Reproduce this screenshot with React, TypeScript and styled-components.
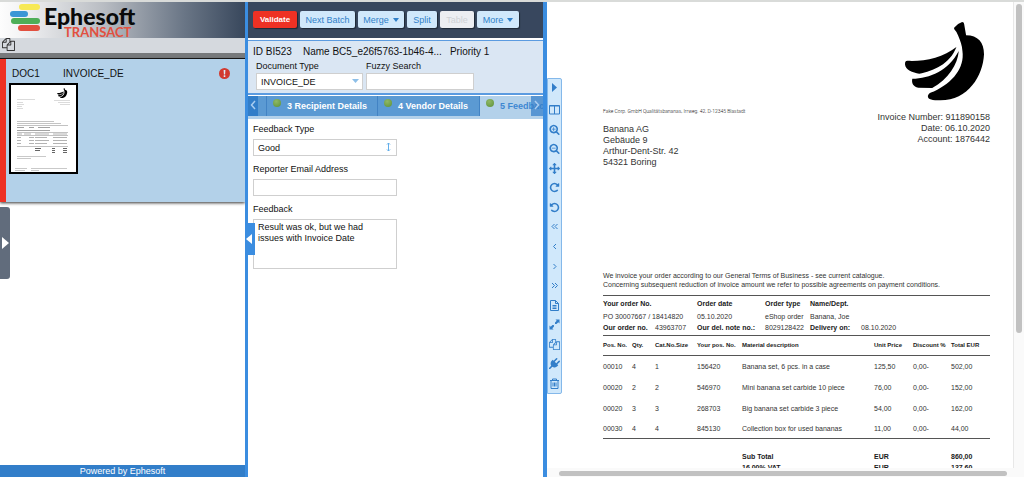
import React from "react";
import styled, { createGlobalStyle } from "styled-components";

const GlobalStyle = createGlobalStyle`
  * { box-sizing: border-box; }
  body { margin: 0; background: #fff; }
  body, button, input, select, textarea {
    font-family: "Liberation Sans", Arial, Helvetica, sans-serif;
    font-size: 9px;
    color: #111;
  }
`;

const Shell = styled.div`
  display: grid;
  grid-template-columns: 245fr 3px 295fr 4px 477fr;
  height: 100vh;
  border-top: 2px solid #d9dbd9;
  overflow: hidden;
`;

const Divider = styled.div`
  position: relative;
  background: #3b8de0;
`;

/* ---------- Batch panel ---------- */

const BatchPanel = styled.section`
  position: relative;
  display: flex;
  flex-direction: column;
  min-width: 0;
`;

const Brand = styled.header`
  display: flex;
  height: 36px;
  flex: none;
  padding: 2px 0 0 10px;
  background: linear-gradient(90deg, #fdfdfd 0%, #f4f4f5 8%, #b9bdc3 42%, #6a7686 75%, #38475c 100%);
`;

const BrandMark = styled.svg`
  width: 31px;
  height: 28px;
  flex: none;
`;

const BrandText = styled.div`
  display: flex;
  flex-direction: column;
  padding-left: 3px;
  font-family: Lato, "Open Sans", sans-serif;
`;

const BrandName = styled.span`
  font-size: 23px;
  line-height: 24px;
  font-weight: 900;
  color: #0a0a0a;
`;

const BrandProduct = styled.span`
  padding-left: 20px;
  margin-top: -2px;
  font-size: 13px;
  line-height: 13px;
  font-weight: 700;
  color: #e2503f;
`;

const BatchTools = styled.div`
  flex: none;
  height: 15px;
  padding-left: 2px;
  background: #d5d9de;
`;

const BatchStrip = styled.div`
  flex: none;
  height: 6px;
  background: #777a7c;
  border-bottom: 1px solid #111;
`;

const PlainButton = styled.button`
  display: flex;
  align-items: center;
  justify-content: center;
  padding: 0;
  border: 0;
  background: none;
  color: inherit;
`;

const DocumentCard = styled.article`
  flex: none;
  height: 143px;
  padding: 4px 15px 0 3px;
  border-left: 6px solid #ee3124;
  background: #b3d1e9;
  box-shadow: 0 1px 3px #333;
`;

const CardHead = styled.div`
  display: flex;
  align-items: center;
  height: 20px;
  padding-left: 3px;
  font-size: 10px;
`;

const CardId = styled.span`
  width: 51px;
`;

const CardAlert = styled.svg`
  width: 11px;
  height: 11px;
  margin-left: auto;
`;

const Thumbnail = styled.svg`
  display: block;
  width: 69px;
  height: 91px;
  border: 2px solid #000;
  background: #fff;
`;

const BatchFooter = styled.footer`
  flex: none;
  height: 12px;
  margin-top: auto;
  background: #327ec9;
  color: #fff;
  line-height: 13px;
  text-align: center;
`;

const SideHandle = styled.button`
  position: absolute;
  left: 0;
  top: 205px;
  width: 10px;
  height: 72px;
  display: flex;
  align-items: center;
  justify-content: flex-end;
  padding: 0 1px 0 0;
  border: 0;
  border-radius: 0 3px 3px 0;
  background: #616c7c;
`;

const CollapseHandle = styled.button`
  position: absolute;
  z-index: 2;
  left: 0;
  top: 221px;
  width: 10px;
  height: 32px;
  display: flex;
  align-items: center;
  padding: 0 0 0 1px;
  border: 0;
  background: #3b8de0;
`;

/* ---------- Validation panel ---------- */

const ValidationPanel = styled.section`
  display: flex;
  flex-direction: column;
  min-width: 0;
`;

const ActionBar = styled.div`
  display: flex;
  flex: none;
  gap: 3px;
  height: 36px;
  padding: 9px 5px;
  background: #38475e;
`;

const Action = styled.button<{ $tone?: "danger" | "muted"; $basis: number }>`
  flex: 0 0 ${(p) => p.$basis}px;
  display: flex;
  align-items: center;
  justify-content: center;
  gap: 4px;
  height: 17px;
  padding: 0;
  border: 0;
  border-radius: 2px;
  box-shadow: 1px 1px 1px #1e2836;
  white-space: nowrap;
  font-weight: ${(p) => (p.$tone === "danger" ? 700 : 400)};
  font-size: ${(p) => (p.$tone === "danger" ? 8 : 9)}px;
  color: ${(p) => (p.$tone === "danger" ? "#fff" : p.$tone === "muted" ? "#cfd2d6" : "#2f7fc8")};
  background: ${(p) => (p.$tone === "danger" ? "#ee3124" : p.$tone === "muted" ? "#eceef2" : "#d0e8fb")};
`;

const BatchInfo = styled.div`
  flex: none;
  height: 55px;
  margin-top: 2px;
  padding: 4px 5px 0;
  border-top: 1px solid #5b9be0;
  border-bottom: 2px solid #5b9be0;
  background: #dae6f3;
`;

const InfoRow = styled.div`
  display: flex;
  gap: 11px;
  height: 15px;
  font-size: 10px;
  line-height: 14px;
  white-space: nowrap;
`;

const InfoName = styled.span`
  width: 136px;
`;

const Lookup = styled.div`
  display: flex;
  gap: 3px;
  padding-left: 3px;
`;

const Field = styled.label`
  display: flex;
  flex-direction: column;
  line-height: 13px;
`;

const FieldBox = styled.span<{ $width: number }>`
  position: relative;
  display: block;
  width: ${(p) => p.$width}px;
`;

const fieldLook = `
  display: block;
  width: 100%;
  height: 17px;
  margin: 0;
  padding: 0 4px;
  border: 1px solid #cfcfcf;
  border-radius: 0;
  background: #fff;
  appearance: none;
  outline: none;
`;

const Input = styled.input`${fieldLook}`;
const Select = styled.select`${fieldLook}`;

const TextArea = styled.textarea`
  ${fieldLook}
  height: 50px;
  padding: 2px 4px;
  line-height: 11px;
  resize: none;
  overflow: hidden;
`;

const FieldIcon = styled.svg<{ $inset: number }>`
  position: absolute;
  top: 3px;
  right: ${(p) => p.$inset}px;
  width: 7px;
  height: 10px;
  pointer-events: none;
`;

const Tabs = styled.div`
  position: relative;
  display: flex;
  flex: none;
  height: 23px;
  margin-top: 1px;
  padding-left: 18px;
  border-bottom: 3px solid #b3d1ea;
  background: #5b9ad3;
  overflow: hidden;
`;

const Tab = styled.button<{ $active?: boolean; $width: number }>`
  flex: 0 0 ${(p) => p.$width}px;
  display: flex;
  gap: 6px;
  padding: 0 0 0 6px;
  border: 0;
  border-left: 1px solid #4283c4;
  white-space: nowrap;
  font-weight: 700;
  line-height: 20px;
  color: ${(p) => (p.$active ? "#3d88d2" : "#fff")};
  background: ${(p) => (p.$active ? "#b3d1ea" : "#5b9ad3")};
`;

const TabDot = styled.span`
  width: 8px;
  height: 8px;
  margin-top: 3px;
  border-radius: 4px;
  background: radial-gradient(circle at 40% 30%, #8fb866, #5c9138);
`;

const TabScroll = styled.button<{ $side: "left" | "right" }>`
  position: absolute;
  top: 0;
  ${(p) => p.$side}: 0;
  width: ${(p) => (p.$side === "left" ? 10 : 12)}px;
  height: 20px;
  padding: 0;
  border: 0;
  background: ${(p) => (p.$side === "left" ? "#327ec9" : "rgba(50, 126, 201, 0.7)")};
`;

const Form = styled.form`
  display: flex;
  flex-direction: column;
  gap: 7px;
  padding: 4px 5px;
`;

const FormField = styled(Field)`
  gap: 3px;
`;

/* ---------- Viewer ---------- */

const Viewer = styled.section`
  display: grid;
  grid-template-columns: 15px minmax(0, 1fr) 11px;
  grid-template-rows: minmax(0, 1fr) 9px;
  min-width: 0;
  min-height: 0;
`;

const ViewerTools = styled.nav`
  align-self: start;
  display: flex;
  flex-direction: column;
  height: 316px;
  margin-top: 76px;
  border: 1px solid #84b8ea;
  border-radius: 0 2px 2px 0;
  background: #d0e8fb;
  color: #327ec9;
`;

const Tool = styled(PlainButton)`
  flex: 1 1 0;
  min-height: 0;
  &:first-child {
    flex: 0 0 17px;
    margin-bottom: 4px;
  }
`;

const Glyph = styled.svg`
  display: block;
  width: 11px;
  height: 11px;
`;

const TrackY = styled.div`
  padding: 2px 2px 0;
  border-left: 1px solid #e8e8e8;
  background: #fafafa;
`;

const TrackX = styled.div`
  grid-column: 1 / -1;
  padding: 3px 17px 0 12px;
  background: #fafafa;
`;

const Thumb = styled.div<{ $vertical?: boolean }>`
  height: ${(p) => (p.$vertical ? "71%" : "5px")};
  border-radius: 3px;
  background: #c1c1c1;
`;

const Invoice = styled.article`
  min-height: 0;
  padding: 19px 23px 0 41px;
  overflow: hidden;
  color: #333;
`;

const InvoiceHead = styled.div`
  display: flex;
  justify-content: space-between;
  height: 250px;
  line-height: 11px;
`;

const Sender = styled.div`
  padding-top: 86px;
`;

const ReturnLine = styled.p`
  margin: 0 0 8px;
  font-family: Roboto, "Liberation Sans", sans-serif;
  font-size: 5px;
  font-weight: 300;
  line-height: 9px;
  color: #111;
`;

const Lines = styled.p`
  margin: 0;
  white-space: pre-line;
`;

const Reference = styled.div`
  text-align: right;
`;

const Banana = styled.svg`
  display: block;
  width: 83px;
  height: 81px;
  margin: 0 4px 10px auto;
`;

const Terms = styled.p`
  margin: 0 0 6px;
  font-size: 7px;
  line-height: 9px;
  white-space: nowrap;
`;

const Sheet = styled.table`
  width: 100%;
  table-layout: fixed;
  border-collapse: separate;
  border-spacing: 0;
  border-top: 1px solid #555;
  font-size: 7px;
  line-height: 9px;
  th, td {
    padding: 0;
    text-align: left;
    vertical-align: middle;
    white-space: nowrap;
  }
  th { color: #1a1a1a; }
`;

const Row = styled.tr<{ $height: number }>`
  height: ${(p) => p.$height}px;
`;

const OrderSheet = styled(Sheet)`
  padding-bottom: 3px;
`;

const ItemSheet = styled(Sheet)`
  thead th {
    font-size: 6px;
    border-bottom: 1px solid #555;
  }
  tbody tr:last-child td { border-bottom: 1px solid #555; }
`;

/* ---------- Drawings ---------- */

const faBox = "0 0 1792 1792";
const filesPath =
  "M1696 384q40 0 68 28t28 68v1216q0 40-28 68t-68 28h-960q-40 0-68-28t-28-68v-288h-544q-40 0-68-28t-28-68v-672q0-40 20-88t48-76l408-408q28-28 76-48t88-20h416q40 0 68 28t28 68v328q68-40 128-40h416zm-544 213l-299 299h299v-299zm-640-384l-299 299h299v-299zm196 647l316-316v-416h-384v416q0 40-28 68t-68 28h-416v640h512v-256q0-40 20-88t48-76zm956 804v-1152h-384v416q0 40-28 68t-68 28h-416v640h896z";
const lens =
  "m128 32q0-185-131.500-316.500t-316.500-131.500-316.500 131.500-131.500 316.500 131.500 316.500 316.500 131.500 316.500-131.500 131.500-316.500zm512 832q0 53-37.500 90.500t-90.500 37.500q-54 0-90-38l-343-342q-179 124-399 124-143 0-273.500-55.500t-225-150-150-225-55.500-273.500 55.500-273.500 150-225 225-150 273.500-55.500 273.500 55.500 225 150 150 225 55.500 273.500q0 220-124 399l343 343q37 37 37 90z";
const zoomInPath =
  "M1088 800v64q0 13-9.500 22.500t-22.500 9.500h-224v224q0 13-9.500 22.500t-22.500 9.500h-64q-13 0-22.500-9.500t-9.500-22.500v-224h-224q-13 0-22.500-9.500t-9.500-22.500v-64q0-13 9.500-22.500t22.500-9.500h224v-224q0-13 9.500-22.500t22.500-9.500h64q13 0 22.500 9.500t9.500 22.500v224h224q13 0 22.500 9.500t9.500 22.500z" + lens;
const zoomOutPath =
  "M1088 800v64q0 13-9.500 22.500t-22.500 9.500h-576q-13 0-22.500-9.500t-9.500-22.500v-64q0-13 9.500-22.500t22.500-9.500h576q13 0 22.500 9.500t9.500 22.500z" + lens;
const movePath =
  "M1792 896q0 26-19 45l-256 256q-19 19-45 19t-45-19-19-45v-128h-384v384h128q26 0 45 19t19 45-19 45l-256 256q-19 19-45 19t-45-19l-256-256q-19-19-19-45t19-45 45-19h128v-384h-384v128q0 26-19 45t-45 19-45-19l-256-256q-19-19-19-45t19-45l256-256q19-19 45-19t45 19 19 45v128h384v-384h-128q-26 0-45-19t-19-45 19-45l256-256q19-19 45-19t45 19l256 256q19 19 19 45t-19 45-45 19h-128v384h384v-128q0-26 19-45t45-19 45 19l256 256q19 19 19 45z";
const rotatePath =
  "M1664 256v448q0 26-19 45t-45 19h-448q-42 0-59-40-17-39 14-69l138-138q-148-137-349-137-104 0-198.500 40.500t-163.500 109.500-109.500 163.500-40.500 198.500 40.500 198.500 109.500 163.500 163.500 109.500 198.500 40.500q119 0 225-52t179-147q7-10 23-12 15 0 25 9l137 138q9 8 9.500 20.500t-7.500 22.500q-109 132-264 204.500t-327 72.500q-156 0-298-61t-245-164-164-245-61-298 61-298 164-245 245-164 298-61q147 0 284.500 55.500t244.500 156.500l130-129q29-31 70-14 39 17 39 59z";
const plugPath =
  "M1755 453q37 38 37 90.500t-37 90.500l-401 400 150 150-160 160q-163 163-389.500 186.500t-411.500-100.500l-362 362h-181v-181l362-362q-124-185-100.500-411.500t186.500-389.500l160-160 150 150 400-401q38-37 91-37t90 37 37 90.500-37 90.500l-400 401 234 234 401-400q38-37 91-37t90 37z";

const Solid = ({ d, flip }: { d: string; flip?: boolean }) => (
  <Glyph viewBox={faBox} fill="currentColor" aria-hidden="true">
    <path d={d} transform={flip ? "translate(1792 0) scale(-1 1)" : undefined} />
  </Glyph>
);

const Line = ({ d, width = 1 }: { d: string; width?: number }) => (
  <Glyph viewBox="0 0 11 11" fill="none" stroke="currentColor" strokeWidth={width} aria-hidden="true">
    <path d={d} />
  </Glyph>
);

const Caret = () => (
  <svg width="6" height="4" viewBox="0 0 6 4" fill="currentColor" aria-hidden="true">
    <path d="M0 0h6L3 4z" />
  </svg>
);

const BananaShape = () => (
  <>
    <path d="M1093 80Q1104 67 1117 63Q1123 63 1123 68L1129 103C1165 103 1183 125 1183 160C1180 225 1135 300 1050 299C1030 299 1012 297 1014 285C1016 277 1022 275 1032 272C1090 245 1125 200 1118 150C1117 135 1112 120 1105 104Q1101 92 1093 84Z" />
    <path d="M1107 150C1104 190 1075 235 1027 262L985 261C970 258 964 247 967 234C1020 232 1075 210 1107 150Z" />
    <path d="M1100 138C1080 190 1030 210 988 219C968 214 946 208 945 190Q945 180 952 180C1000 183 1060 170 1100 138Z" />
  </>
);

const tools: { label: string; icon: React.ReactNode }[] = [
  { label: "Show", icon: <Glyph viewBox="0 0 11 11" fill="currentColor"><path d="M3 1l5 4.500L3 10z" /></Glyph> },
  { label: "Columns", icon: <Line d="M.5 1.500h10v8.500H.5zM5.500 1.500V10M.5 2h10" /> },
  { label: "Zoom in", icon: <Solid d={zoomInPath} /> },
  { label: "Zoom out", icon: <Solid d={zoomOutPath} /> },
  { label: "Move", icon: <Solid d={movePath} /> },
  { label: "Rotate right", icon: <Solid d={rotatePath} /> },
  { label: "Rotate left", icon: <Solid d={rotatePath} flip /> },
  { label: "First page", icon: <Line d="M5.500 3L3 5.500 5.500 8M8.500 3L6 5.500 8.500 8" /> },
  { label: "Previous page", icon: <Line d="M7 3L4.500 5.500 7 8" /> },
  { label: "Next page", icon: <Line d="M4.500 3L7 5.500 4.500 8" /> },
  { label: "Last page", icon: <Line d="M3 3l2.500 2.500L3 8M6 3l2.500 2.500L6 8" /> },
  { label: "Page text", icon: <Line d="M1.500.5h5l3 3v7h-8zM6.500.5v3h3M3.500 5.500h4M3.500 7h4M3.500 8.500h4" /> },
  {
    label: "Fit",
    icon: (
      <Glyph viewBox="0 0 11 11" fill="currentColor">
        <path d="M6.500.500h4v4L9.300 3.300 7.500 5.100 6 5.100 4.900 6.200 4.900 7.700 3.300 9.300 4.500 10.500h-4v-4L1.700 7.700 3.500 5.900 5 5.900 6 4.900 6 3.400 7.700 1.700z" />
      </Glyph>
    ),
  },
  { label: "Copy", icon: <Solid d={filesPath} /> },
  { label: "Connect", icon: <Solid d={plugPath} /> },
  { label: "Delete", icon: <Line d="M1 2.500h9M3.500 2.500V1h4v1.500M2 2.500v8h7v-8M4 4.500v4M5.500 4.500v4M7 4.500v4" /> },
];

const items = [
  ["00010", "4", "1", "156420", "Banana set, 6 pcs. in a case", "125,50", "0,00-", "502,00"],
  ["00020", "2", "2", "546970", "Mini banana set carbide 10 piece", "76,00", "0,00-", "152,00"],
  ["00020", "3", "3", "268703", "Big banana set carbide 3 piece", "54,00", "0,00-", "162,00"],
  ["00030", "4", "4", "845130", "Collection box for used bananas", "11,00", "0,00-", "44,00"],
];
const itemHeads = ["Pos. No.", "Qty.", "Cat.No.Size", "Your pos. No.", "Material description", "Unit Price", "Discount %", "Total EUR"];
const totals = [
  ["Sub Total", "EUR", "860,00"],
  ["16,00% VAT", "EUR", "137,60"],
];

const Columns = ({ widths }: { widths: number[] }) => (
  <colgroup>
    {widths.map((w, i) => (
      <col key={i} width={w} />
    ))}
  </colgroup>
);

export default function App() {
  return (
    <>
      <GlobalStyle />
      <Shell>
        <BatchPanel>
          <Brand>
            <BrandMark viewBox="0 0 31 28" aria-hidden="true">
              <rect x="9" y="0" width="21" height="6" rx="3" fill="#f7e955" />
              <rect x="0" y="7" width="18" height="6" rx="3" fill="#3b96d6" />
              <rect x="1" y="14" width="29" height="6" rx="3" fill="#4fae57" />
              <rect x="8" y="21" width="22" height="6" rx="3" fill="#e2503f" />
            </BrandMark>
            <BrandText>
              <BrandName>Ephesoft</BrandName>
              <BrandProduct>TRANSACT</BrandProduct>
            </BrandText>
          </Brand>
          <BatchTools>
            <PlainButton type="button" aria-label="Copy documents">
              <svg width="13" height="13" viewBox={faBox} fill="#333">
                <path d={filesPath} />
              </svg>
            </PlainButton>
          </BatchTools>
          <BatchStrip />
          <DocumentCard>
            <CardHead>
              <CardId>DOC1</CardId>
              <span>INVOICE_DE</span>
              <CardAlert viewBox="0 0 11 11" role="img" aria-label="Needs review">
                <circle cx="5.500" cy="5.500" r="5.500" fill="#d23a30" />
                <path d="M4.600 2h1.800l-.3 4.400H4.900zM4.700 7.300h1.600v1.600H4.700z" fill="#dcebf7" />
              </CardAlert>
            </CardHead>
            <Thumbnail viewBox="0 0 65 87" aria-label="Page 1">
              <g transform="translate(46 3) scale(.042) translate(-940 -60)">
                <BananaShape />
              </g>
              <path d="M6 14.500h18M43 15.500h16M47 17.500h12M49 19.500h10M6 17.500h6M6 19.500h7M6 21.500h5M6 23.500h6" stroke="#ccc" strokeWidth=".7" />
              <path d="M6 36.500h37M6 38.500h44" stroke="#aaa" strokeWidth=".7" />
              <path d="M6 42.500h7M18 42.500h5M27 42.500h12M6 45.500h12M18 45.500h21" stroke="#999" strokeWidth=".9" />
              <path d="M6 40.500h51M6 47.500h51M6 50.500h51M6 61.500h51" stroke="#999" strokeWidth=".6" />
              <path d="M6 49h5M13 49h7M24 49h14M42 49h14M6 52.500h4M18 52.500h5M24 52.500h12M42 52.500h14M6 55.500h4M18 55.500h5M24 55.500h14M42 55.500h14M6 58.500h4M18 58.500h5M24 58.500h12M42 58.500h14" stroke="#aaa" strokeWidth=".9" />
              <path d="M24 63.500h6M24 65.500h5M41 63.500h3M41 65.500h3M52 63.500h4M52 65.500h4M41 67.500h3M52 67.500h4" stroke="#666" strokeWidth="1" />
              <path d="M6 71.500h29M6 73.500h14M4 83.500h12M20 83.500h36M4 85.500h10M20 85.500h8" stroke="#bbb" strokeWidth=".8" />
            </Thumbnail>
          </DocumentCard>
          <BatchFooter>Powered by Ephesoft</BatchFooter>
          <SideHandle type="button" aria-label="Open side panel">
            <svg width="7" height="12" viewBox="0 0 7 12" fill="#fff"><path d="M0 0l7 6-7 6z" /></svg>
          </SideHandle>
        </BatchPanel>

        <Divider>
          <CollapseHandle type="button" aria-label="Collapse panel">
            <svg width="6" height="10" viewBox="0 0 6 10" fill="#fff"><path d="M6 0v10L0 5z" /></svg>
          </CollapseHandle>
        </Divider>

        <ValidationPanel>
          <ActionBar>
            <Action type="button" $basis={44} $tone="danger">Validate</Action>
            <Action type="button" $basis={55}>Next Batch</Action>
            <Action type="button" $basis={46}>Merge <Caret /></Action>
            <Action type="button" $basis={30}>Split</Action>
            <Action type="button" $basis={34} $tone="muted" disabled>Table</Action>
            <Action type="button" $basis={42}>More <Caret /></Action>
          </ActionBar>
          <BatchInfo>
            <InfoRow>
              <span>ID BI523</span>
              <InfoName>Name BC5_e26f5763-1b46-4...</InfoName>
              <span>Priority 1</span>
            </InfoRow>
            <Lookup>
              <Field>
                Document Type
                <FieldBox $width={107}>
                  <Select defaultValue="INVOICE_DE">
                    <option>INVOICE_DE</option>
                  </Select>
                  <FieldIcon $inset={4} viewBox="0 0 7 10" fill="#8dbfe8"><path d="M0 3h7L3.500 7z" /></FieldIcon>
                </FieldBox>
              </Field>
              <Field>
                Fuzzy Search
                <FieldBox $width={108}><Input type="text" /></FieldBox>
              </Field>
            </Lookup>
          </BatchInfo>
          <Tabs role="tablist">
            <Tab type="button" role="tab" $width={111}><TabDot />3 Recipient Details</Tab>
            <Tab type="button" role="tab" $width={102}><TabDot />4 Vendor Details</Tab>
            <Tab type="button" role="tab" aria-selected $active $width={90}><TabDot />5 Feedback</Tab>
            <TabScroll type="button" $side="left" aria-label="Previous tabs">
              <svg width="6" height="10" viewBox="0 0 6 10" fill="none" stroke="#a9cdf0" strokeWidth="1.500"><path d="M5 1L1.500 5 5 9" /></svg>
            </TabScroll>
            <TabScroll type="button" $side="right" aria-label="Next tabs">
              <svg width="6" height="10" viewBox="0 0 6 10" fill="none" stroke="#a9cdf0" strokeWidth="1.500"><path d="M1 1l3.500 4L1 9" /></svg>
            </TabScroll>
          </Tabs>
          <Form>
            <FormField>
              Feedback Type
              <FieldBox $width={144}>
                <Select defaultValue="Good">
                  <option>Good</option>
                </Select>
                <FieldIcon $inset={5} viewBox="0 0 7 10" fill="none" stroke="#62aeea"><path d="M3.500 1v8M2 2.500L3.500 1 5 2.500M2 7.500L3.500 9 5 7.500" /></FieldIcon>
              </FieldBox>
            </FormField>
            <FormField>
              Reporter Email Address
              <FieldBox $width={144}><Input type="email" /></FieldBox>
            </FormField>
            <FormField>
              Feedback
              <FieldBox $width={144}>
                <TextArea defaultValue={"Result was ok, but we had\nissues with Invoice Date"} />
              </FieldBox>
            </FormField>
          </Form>
        </ValidationPanel>

        <Divider />

        <Viewer>
          <ViewerTools>
            {tools.map((t) => (
              <Tool key={t.label} type="button" aria-label={t.label}>{t.icon}</Tool>
            ))}
          </ViewerTools>
          <Invoice>
            <InvoiceHead>
              <Sender>
                <ReturnLine>Fake Corp. GmbH Qualitätsbananas, Irrweg. 42, D-12345 Blastadt</ReturnLine>
                <Lines>{"Banana AG\nGebäude 9\nArthur-Dent-Str. 42\n54321 Boring"}</Lines>
              </Sender>
              <Reference>
                <Banana viewBox="940 60 248 244" fill="#000" aria-label="Banana logo"><BananaShape /></Banana>
                <Lines>{"Invoice Number: 911890158\nDate: 06.10.2020\nAccount: 1876442"}</Lines>
              </Reference>
            </InvoiceHead>
            <Terms>
              We invoice your order according to our General Terms of Business - see current catalogue.<br />
              Concerning subsequent reduction of invoice amount we refer to possible agreements on payment conditions.
            </Terms>
            <OrderSheet>
              <Columns widths={[52, 42, 68, 45, 51, 129]} />
              <tbody>
                <Row $height={14}>
                  <th colSpan={2}>Your order No.</th><th>Order date</th><th>Order type</th><th colSpan={2}>Name/Dept.</th>
                </Row>
                <Row $height={12}>
                  <td colSpan={2}>PO 30007667 / 18414820</td><td>05.10.2020</td><td>eShop order</td><td colSpan={2}>Banana, Joe</td>
                </Row>
                <Row $height={10}>
                  <th>Our order no.</th><td>43963707</td><th>Our del. note no.:</th><td>8029128422</td><th>Delivery on:</th><td>08.10.2020</td>
                </Row>
              </tbody>
            </OrderSheet>
            <ItemSheet>
              <Columns widths={[29, 23, 42, 45, 132, 39, 38, 39]} />
              <thead>
                <Row $height={20}>{itemHeads.map((h) => <th key={h}>{h}</th>)}</Row>
              </thead>
              <tbody>
                {items.map((cells, i) => (
                  <Row key={i} $height={i === items.length - 1 ? 20 : 21}>
                    {cells.map((c, j) => <td key={j}>{c}</td>)}
                  </Row>
                ))}
              </tbody>
              <tfoot>
                <Row $height={12}><td colSpan={8} /></Row>
                {totals.map(([name, unit, sum]) => (
                  <Row key={name} $height={11}>
                    <td colSpan={4} /><th>{name}</th><th colSpan={2}>{unit}</th><th>{sum}</th>
                  </Row>
                ))}
              </tfoot>
            </ItemSheet>
          </Invoice>
          <TrackY><Thumb $vertical /></TrackY>
          <TrackX><Thumb /></TrackX>
        </Viewer>
      </Shell>
    </>
  );
}
